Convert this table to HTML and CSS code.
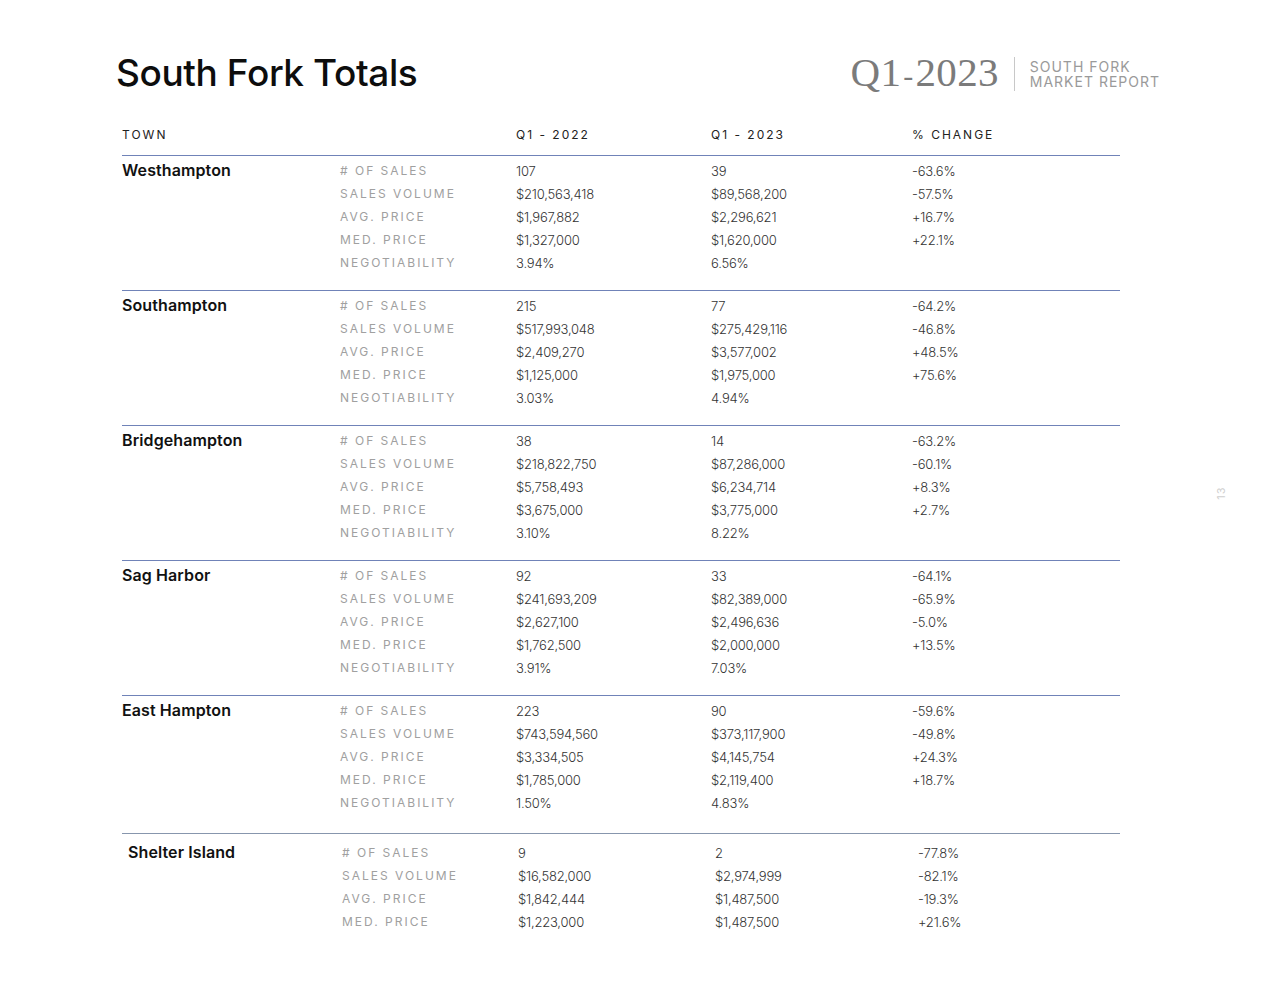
FILE: index.html
```html
<!DOCTYPE html>
<html lang="en">
<head>
<meta charset="utf-8">
<title>South Fork Totals</title>
<link rel="stylesheet" href="styles.css">
</head>
<body>
<div class="page">
  <header class="top">
    <h1 class="title">South Fork Totals</h1>
    <div class="brand">
      <span class="brand-q">Q1<span class="brand-dash">-</span>2023</span>
      <span class="brand-div"></span>
      <span class="brand-text">SOUTH FORK<br>MARKET REPORT</span>
    </div>
  </header>

  <section class="table">
    <div class="head">
      <span>TOWN</span><span></span><span>Q1 - 2022</span><span>Q1 - 2023</span><span>% CHANGE</span>
    </div>

    <div class="block">
      <div class="town">Westhampton</div>
      <div class="rows">
        <div class="row"><span class="lbl"># OF SALES</span><span>107</span><span>39</span><span>-63.6%</span></div>
        <div class="row"><span class="lbl">SALES VOLUME</span><span>$210,563,418</span><span>$89,568,200</span><span>-57.5%</span></div>
        <div class="row"><span class="lbl">AVG. PRICE</span><span>$1,967,882</span><span>$2,296,621</span><span>+16.7%</span></div>
        <div class="row"><span class="lbl">MED. PRICE</span><span>$1,327,000</span><span>$1,620,000</span><span>+22.1%</span></div>
        <div class="row"><span class="lbl">NEGOTIABILITY</span><span>3.94%</span><span>6.56%</span><span></span></div>
      </div>
    </div>

    <div class="block">
      <div class="town">Southampton</div>
      <div class="rows">
        <div class="row"><span class="lbl"># OF SALES</span><span>215</span><span>77</span><span>-64.2%</span></div>
        <div class="row"><span class="lbl">SALES VOLUME</span><span>$517,993,048</span><span>$275,429,116</span><span>-46.8%</span></div>
        <div class="row"><span class="lbl">AVG. PRICE</span><span>$2,409,270</span><span>$3,577,002</span><span>+48.5%</span></div>
        <div class="row"><span class="lbl">MED. PRICE</span><span>$1,125,000</span><span>$1,975,000</span><span>+75.6%</span></div>
        <div class="row"><span class="lbl">NEGOTIABILITY</span><span>3.03%</span><span>4.94%</span><span></span></div>
      </div>
    </div>

    <div class="block">
      <div class="town">Bridgehampton</div>
      <div class="rows">
        <div class="row"><span class="lbl"># OF SALES</span><span>38</span><span>14</span><span>-63.2%</span></div>
        <div class="row"><span class="lbl">SALES VOLUME</span><span>$218,822,750</span><span>$87,286,000</span><span>-60.1%</span></div>
        <div class="row"><span class="lbl">AVG. PRICE</span><span>$5,758,493</span><span>$6,234,714</span><span>+8.3%</span></div>
        <div class="row"><span class="lbl">MED. PRICE</span><span>$3,675,000</span><span>$3,775,000</span><span>+2.7%</span></div>
        <div class="row"><span class="lbl">NEGOTIABILITY</span><span>3.10%</span><span>8.22%</span><span></span></div>
      </div>
    </div>

    <div class="block">
      <div class="town">Sag Harbor</div>
      <div class="rows">
        <div class="row"><span class="lbl"># OF SALES</span><span>92</span><span>33</span><span>-64.1%</span></div>
        <div class="row"><span class="lbl">SALES VOLUME</span><span>$241,693,209</span><span>$82,389,000</span><span>-65.9%</span></div>
        <div class="row"><span class="lbl">AVG. PRICE</span><span>$2,627,100</span><span>$2,496,636</span><span>-5.0%</span></div>
        <div class="row"><span class="lbl">MED. PRICE</span><span>$1,762,500</span><span>$2,000,000</span><span>+13.5%</span></div>
        <div class="row"><span class="lbl">NEGOTIABILITY</span><span>3.91%</span><span>7.03%</span><span></span></div>
      </div>
    </div>

    <div class="block block--tall">
      <div class="town">East Hampton</div>
      <div class="rows">
        <div class="row"><span class="lbl"># OF SALES</span><span>223</span><span>90</span><span>-59.6%</span></div>
        <div class="row"><span class="lbl">SALES VOLUME</span><span>$743,594,560</span><span>$373,117,900</span><span>-49.8%</span></div>
        <div class="row"><span class="lbl">AVG. PRICE</span><span>$3,334,505</span><span>$4,145,754</span><span>+24.3%</span></div>
        <div class="row"><span class="lbl">MED. PRICE</span><span>$1,785,000</span><span>$2,119,400</span><span>+18.7%</span></div>
        <div class="row"><span class="lbl">NEGOTIABILITY</span><span>1.50%</span><span>4.83%</span><span></span></div>
      </div>
    </div>

    <div class="block block--last">
      <div class="town">Shelter Island</div>
      <div class="rows">
        <div class="row"><span class="lbl"># OF SALES</span><span>9</span><span>2</span><span>-77.8%</span></div>
        <div class="row"><span class="lbl">SALES VOLUME</span><span>$16,582,000</span><span>$2,974,999</span><span>-82.1%</span></div>
        <div class="row"><span class="lbl">AVG. PRICE</span><span>$1,842,444</span><span>$1,487,500</span><span>-19.3%</span></div>
        <div class="row"><span class="lbl">MED. PRICE</span><span>$1,223,000</span><span>$1,487,500</span><span>+21.6%</span></div>
      </div>
    </div>
  </section>

  <div class="pagenum">13</div>
</div>
</body>
</html>
```

FILE: styles.css
```css
html, body {
  margin: 0;
  padding: 0;
  background: #ffffff;
}

.page {
  position: relative;
  width: 1280px;
  height: 989px;
  box-sizing: border-box;
  padding: 50px 120px 0 116px;
  font-family: "Inter", "Liberation Sans", sans-serif;
  color: #222;
}

.top {
  display: flex;
  justify-content: space-between;
  align-items: center;
  height: 46px;
}

.title {
  margin: 0;
  font-size: 37px;
  font-weight: 500;
  letter-spacing: -0.4px;
  color: #0d0d0d;
  line-height: 46px;
}

.brand {
  display: flex;
  align-items: center;
  gap: 15px;
  margin-top: 2px;
}

.brand-q {
  font-family: "Liberation Serif", "DejaVu Serif", serif;
  font-size: 41px;
  color: #7b7b7b;
  letter-spacing: 0.3px;
  line-height: 40px;
}

.brand-dash {
  display: inline-block;
  margin: 0 2px;
  font-size: 30px;
}

.brand-div {
  width: 1px;
  height: 34px;
  background: #c8c8c8;
}

.brand-text {
  font-size: 14px;
  line-height: 15px;
  letter-spacing: 1px;
  color: #9a9a9a;
  font-weight: 400;
}

.table {
  margin-top: 29px;
  margin-left: 6px;
  width: 998px;
}

.head {
  display: grid;
  grid-template-columns: 218px 176px 195px 201px 1fr;
  font-size: 12px;
  letter-spacing: 2px;
  color: #222;
  line-height: 20px;
  padding-bottom: 10px;
}

.block {
  display: grid;
  grid-template-columns: 218px 1fr;
  border-top: 1.5px solid #7083b8;
  padding: 3px 0 16px;
}

.block--tall {
  padding-bottom: 19px;
}

.block--last {
  border-top-color: #8796ad;
  padding: 7px 0 0 6px;
  grid-template-columns: 214px 1fr;
}

.block--last .row {
  grid-template-columns: 176px 197px 203px 1fr;
}

.town {
  font-size: 16px;
  font-weight: 600;
  color: #111;
  line-height: 23px;
  letter-spacing: 0.1px;
}

.rows {
  display: flex;
  flex-direction: column;
}

.row {
  display: grid;
  grid-template-columns: 176px 195px 201px 1fr;
  height: 23px;
  align-items: center;
  font-size: 13px;
  font-weight: 300;
  color: #333;
  letter-spacing: -0.2px;
}

.lbl {
  font-size: 12px;
  font-weight: 400;
  color: #a0a0a0;
  letter-spacing: 2px;
}

.pagenum {
  position: absolute;
  left: 1214px;
  top: 486px;
  font-size: 11px;
  color: #cfcfcf;
  transform: rotate(-90deg);
  letter-spacing: 1px;
}
```
